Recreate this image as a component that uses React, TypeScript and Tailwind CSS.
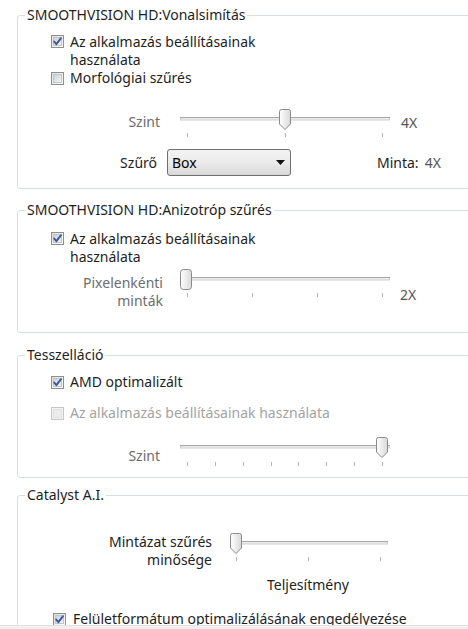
import React from 'react';

type CheckProps = { checked?: boolean; disabled?: boolean };

const CheckBox: React.FC<CheckProps> = ({ checked, disabled }) => (
  <svg width={13} height={13} className="block shrink-0">
    <defs>
      <linearGradient id="cbOuter" x1="0" y1="0" x2="1" y2="1">
        <stop offset="0" stopColor="#dcdcdc" />
        <stop offset="1" stopColor="#ffffff" />
      </linearGradient>
      <linearGradient id="cbInner" x1="0" y1="0" x2="1" y2="1">
        <stop offset="0" stopColor="#cbcfd5" />
        <stop offset="1" stopColor="#f6f6f6" />
      </linearGradient>
    </defs>
    <rect x={0.5} y={0.5} width={12} height={12} fill={disabled ? '#f4f4f4' : 'url(#cbOuter)'} stroke={disabled ? '#c5c5c5' : '#8e8f8f'} />
    <rect x={2.5} y={2.5} width={8} height={8} fill={disabled ? '#ececec' : 'url(#cbInner)'} stroke={disabled ? '#e0e0e0' : '#c2c6cc'} />
    {checked && (
      <path d="M3.2 6.6 L5.4 9.2 L10 3.2" fill="none" stroke="#3c5a9a" strokeWidth={1.9} strokeLinecap="round" strokeLinejoin="round" />
    )}
  </svg>
);

interface SliderProps {
  w: number;
  a: number;
  b: number;
  ticks: number[];
  thumb: number;
  rounded?: boolean;
  tickY?: number;
}

const Slider: React.FC<SliderProps> = ({ w, a, b, ticks, thumb, rounded, tickY = 24 }) => (
  <svg width={w} height={32} className="block shrink-0">
    <defs>
      <linearGradient id="thumbGrad" x1="0" y1="0" x2="1" y2="0">
        <stop offset="0" stopColor="#ffffff" />
        <stop offset="1" stopColor="#d9d9d9" />
      </linearGradient>
    </defs>
    <rect x={a + 0.5} y={8.5} width={b - a} height={2.5} fill="#e9ebeb" stroke="#d0d0d0" />
    <line x1={a} y1={8.5} x2={b + 1} y2={8.5} stroke="#a8a8a8" />
    {ticks.map((t) => (
      <line key={t} x1={t + 0.5} y1={tickY} x2={t + 0.5} y2={tickY + 4} stroke="#b4b4b4" />
    ))}
    {rounded ? (
      <rect x={thumb + 0.5} y={0.5} width={11} height={20} rx={3} fill="url(#thumbGrad)" stroke="#8a8a8a" />
    ) : (
      <path
        d={`M${thumb + 2.5} 0.5 H${thumb + 9.5} Q${thumb + 11.5} 0.5 ${thumb + 11.5} 2.5 V15 L${thumb + 6} 20.5 L${thumb + 0.5} 15 V2.5 Q${thumb + 0.5} 0.5 ${thumb + 2.5} 0.5 Z`}
        fill="url(#thumbGrad)"
        stroke="#8a8a8a"
      />
    )}
  </svg>
);

const Group: React.FC<{ title: string; className?: string; children: React.ReactNode }> = ({ title, className, children }) => (
  <fieldset className={`ml-[17px] mr-[-30px] border border-[#d5dfe5] rounded-[3px] pl-[7px] ${className ?? ''}`}>
    <legend className="px-[2px] text-[14px] leading-[20px] text-[#1e1e1e]">{title}</legend>
    {children}
  </fieldset>
);

export default function App() {
  const tess = Array.from({ length: 8 }, (_, i) => Math.round(9 + i * 27.86));
  return (
    <div className="w-[468px] h-[629px] overflow-hidden bg-white flex flex-col font-['Noto_Sans',sans-serif] text-[14px] text-[#1e1e1e]">
      <div className="h-[625px] overflow-hidden">
        <Group title="SMOOTHVISION HD:Vonalsimítás" className="mt-[5px] pb-[12px]">
          <div className="ml-[26px] mt-[8px] flex items-start leading-[18px]">
            <div className="mt-[2px]"><CheckBox checked /></div>
            <span className="ml-[6px]">Az alkalmazás beállításainak<br />használata</span>
          </div>
          <div className="ml-[26px] flex items-start leading-[18px]">
            <div className="mt-[3px]"><CheckBox /></div>
            <span className="ml-[6px]">Morfológiai szűrés</span>
          </div>
          <div className="mt-[22px] flex items-start h-[32px]">
            <span className="w-[135px] text-right mt-[3px] leading-[20px] text-[#6d6d6d]">Szint</span>
            <div className="ml-[18px]"><Slider w={214} a={2} b={211} ticks={[9, 107, 204]} thumb={101} /></div>
            <span className="ml-[9px] mt-[4px] leading-[20px] text-[#555]">4X</span>
          </div>
          <div className="mt-[8px] flex items-center h-[27px]">
            <span className="w-[132px] text-right">Szűrő</span>
            <div className="ml-[10px] w-[124px] h-[27px] border border-[#707070] rounded-[3px] bg-linear-to-b from-[#f3f3f3] via-[#ebebeb] to-[#d8d8d8] flex items-center pl-[4px] pr-[5px]">
              <span className="flex-1 text-black">Box</span>
              <svg width={9} height={5} className="block"><polygon points="0,0 9,0 4.5,5" fill="#111" /></svg>
            </div>
            <span className="ml-[86px]">Minta:</span>
            <span className="ml-[6px] text-[#555]">4X</span>
          </div>
        </Group>

        <Group title="SMOOTHVISION HD:Anizotróp szűrés" className="mt-[11px] pb-[21px]">
          <div className="ml-[26px] mt-[10px] flex items-start leading-[18px]">
            <div className="mt-[2px]"><CheckBox checked /></div>
            <span className="ml-[6px]">Az alkalmazás beállításainak<br />használata</span>
          </div>
          <div className="mt-[3px] flex items-start h-[42px]">
            <span className="w-[138px] text-right mt-[5px] leading-[18px] text-[#6d6d6d]">Pixelenkénti<br />minták</span>
            <div className="ml-[15px]"><Slider w={214} a={2} b={211} ticks={[9, 74, 139, 204]} thumb={2} rounded /></div>
            <span className="ml-[8px] mt-[16px] leading-[20px] text-[#555]">2X</span>
          </div>
        </Group>

        <Group title="Tesszelláció" className="mt-[12px] pb-[8px]">
          <div className="ml-[26px] mt-[8px] flex items-center leading-[18px]">
            <CheckBox checked />
            <span className="ml-[6px]">AMD optimalizált</span>
          </div>
          <div className="ml-[26px] mt-[13px] flex items-center leading-[18px] text-[#a3a3a3]">
            <CheckBox disabled />
            <span className="ml-[6px]">Az alkalmazás beállításainak használata</span>
          </div>
          <div className="mt-[15px] flex items-start h-[32px]">
            <span className="w-[135px] text-right mt-[9px] leading-[20px] text-[#6d6d6d]">Szint</span>
            <div className="ml-[18px]"><Slider w={214} a={2} b={211} ticks={tess} thumb={198} tickY={25} /></div>
          </div>
        </Group>

        <Group title="Catalyst A.I." className="mt-[7px] pb-[20px]">
          <div className="mt-[28px] flex items-start h-[36px]">
            <span className="w-[187px] text-right leading-[18px] text-[#222]">Mintázat szűrés<br />minősége</span>
            <div className="ml-[16px]"><Slider w={164} a={2} b={159} ticks={[8, 80, 152]} thumb={2} /></div>
          </div>
          <div className="mt-[7px] ml-[242px] leading-[18px] text-[#222]">Teljesítmény</div>
          <div className="ml-[28px] mt-[16px] flex items-center leading-[18px]">
            <CheckBox checked />
            <span className="ml-[7px]">Felületformátum optimalizálásának engedélyezése</span>
          </div>
        </Group>
      </div>
      <div className="h-[4px] bg-[#f0f0f0] border-t border-[#e3e3e3]" />
    </div>
  );
}
